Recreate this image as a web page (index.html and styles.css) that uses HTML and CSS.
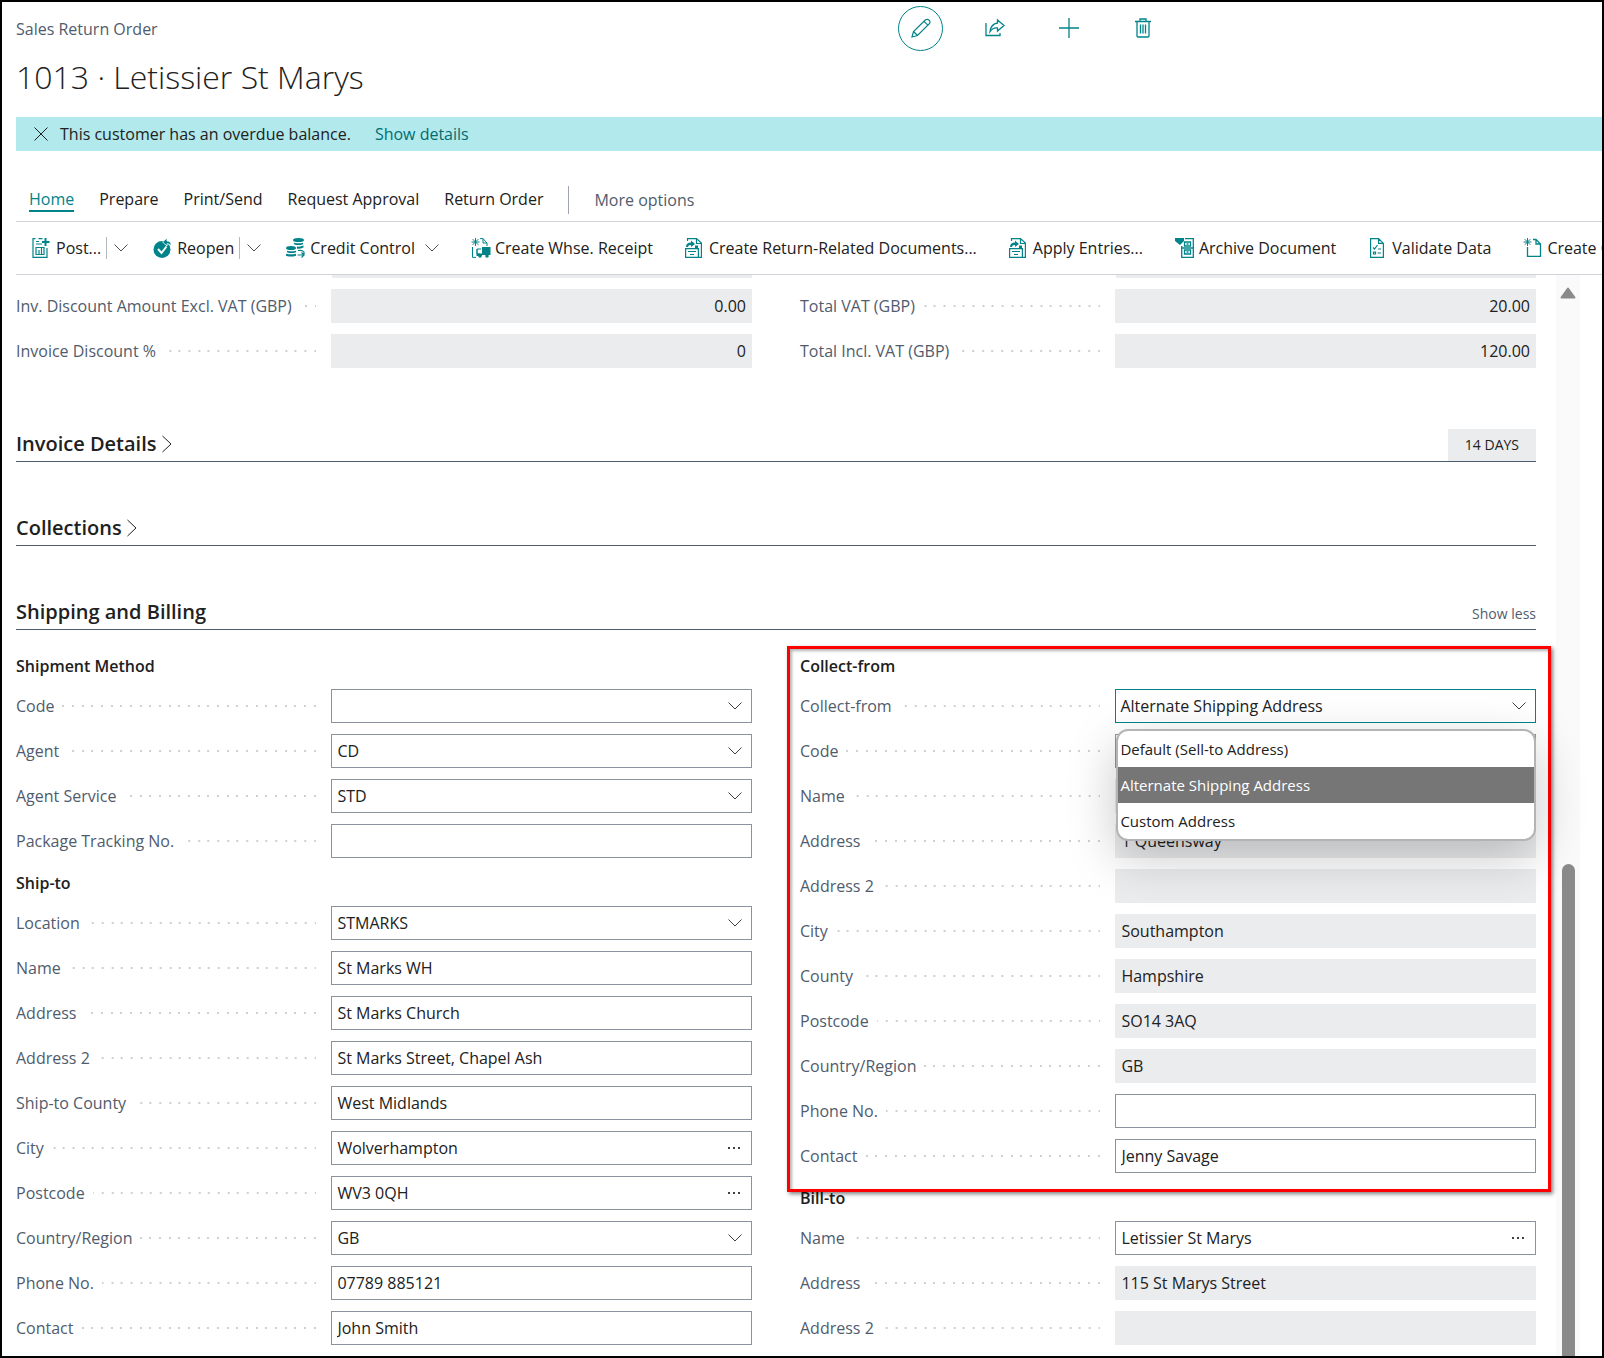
FILE: index.html
```html
<!DOCTYPE html>
<html lang="en">
<head>
    <meta charset="UTF-8">
    <meta name="viewport" content="width=device-width, initial-scale=1.0">
    <title>Sales Return Order - 1013 · Letissier St Marys</title>
    <link rel="stylesheet" href="styles.css">
</head>
<body>

    <!-- Icon sprite -->
    <svg class="sprite" aria-hidden="true">
        <symbol id="i-chevron" viewBox="0 0 14 8"><path d="M0.5 0.5 7 7 13.5 0.5" fill="none" stroke="currentColor"/></symbol>
        <symbol id="i-right" viewBox="0 0 10 18"><path d="M0.5 1 9 9 0.5 17" fill="none" stroke="currentColor"/></symbol>
        <symbol id="i-close" viewBox="0 0 14 14"><path d="M0.5 0.5 13.5 13.5M13.5 0.5 0.5 13.5" fill="none" stroke="currentColor"/></symbol>
        <symbol id="i-dots" viewBox="0 0 16 4"><path d="M2 1h2v2H2zM7 1h2v2H7zM12 1h2v2h-2z" fill="currentColor"/></symbol>
        <symbol id="i-edit" viewBox="0 0 20 20"><path d="M1 19l1.500-5.500L14.500 1.800q2-1.200 3.600.300t.300 3.600L6.500 17.500zM2.500 13.500l4 4M13 3.300l3.800 3.800" fill="none" stroke="currentColor" stroke-width="1.200"/></symbol>
        <symbol id="i-share" viewBox="0 0 20 20"><path d="M1 5v12.500h14V15" fill="none" stroke="currentColor" stroke-width="1.300"/><path d="M12.500 2 19 7.500 12.500 13v-3Q8 9.500 5 13.500 6 6 12.500 5z" fill="none" stroke="currentColor" stroke-width="1.300"/></symbol>
        <symbol id="i-plus" viewBox="0 0 20 20"><path d="M10 0v20M0 10h20" fill="none" stroke="currentColor" stroke-width="1.300"/></symbol>
        <symbol id="i-trash" viewBox="0 0 16 20"><path d="M0 3.500h16M5 3V1h6v2M2 4v14q0 1 1 1h10q1 0 1-1V4M5.500 6.500v9M8 6.500v9M10.500 6.500v9" fill="none" stroke="currentColor" stroke-width="1.300"/></symbol>
        <symbol id="i-post" viewBox="0 0 20 20"><path d="M3.500.600H1V19.400h14V10M4 3.500h3M6.500.600h4M4 6h6M4 16.500V9.500h8v7zM7 12v4.500M9.500 10v6.500" fill="none" stroke="currentColor" stroke-width="1.200"/><path d="M13.500 0v8M10 4h7.500" fill="none" stroke="currentColor" stroke-width="2"/></symbol>
        <symbol id="i-reopen" viewBox="0 0 20 20"><circle cx="9" cy="11.500" r="8.500" fill="currentColor"/><path d="M5 11l3.500 4 5-6.500" fill="none" stroke="#fff" stroke-width="2"/><path d="M9.500 4 14 0v3q4.500 0 4 5-1.500-2.500-4-2.300V8z" fill="currentColor" stroke="#fff" stroke-width=".8"/></symbol>
        <symbol id="i-coins" viewBox="0 0 20 20">
            <path d="M7 2q0-2 5.500-2T18 2t-5.500 2T7 2zM8 4.700q4.500 1.300 9 0v1.500q-4.500 1.800-9 0zM11 8.500q3.500.500 6.500-1v2q-3 1.500-6.500 1.200zM0 10q0-2 5-2t5 2-5 2-5-2zM1 12.700q4.500 1.300 9 0v1.500q-4.500 1.800-9 0zM0 15.700q4.500 1.300 10 0v2q-5 1.800-10 0z" fill="currentColor"/>
            <path d="M12 12.500q4.500-.5 6 1.500v3M11.500 17H18M15.500 14.500 18 17l-2.500 2.500" fill="none" stroke="currentColor" stroke-width="1.200"/>
        </symbol>
        <symbol id="i-whse" viewBox="0 0 20 20"><path d="M4.500 0v8M.500 4h8M1.700 1.200l5.600 5.600M7.300 1.200 1.700 6.800M9 .600h3l4 4.500V8M12 .600V5h4M1.500 9v10.400H5M6 18v-7h4M6 11v5h3" fill="none" stroke="currentColor"/><path d="M11 9h8.500v8H11z" fill="currentColor"/><path d="M6 15.500h5V18H6z" fill="currentColor"/><circle cx="9" cy="18" r="1.800" fill="currentColor"/><circle cx="16" cy="18" r="1.800" fill="currentColor"/></symbol>
        <symbol id="i-apply" viewBox="0 0 20 20"><path d="M2.500 3V.600h9L16.400 5v14.400H14M11.500.600V5.500h5M.600 10.600h12.800v8.800H.600zM3 13.500h8M5 16.500h4" fill="none" stroke="currentColor" stroke-width="1.200"/><path d="M1 9Q1 4.500 6 4.500V2.500L10 6 6 9V7Q3 7 3 9zM10 7.500h3V10h-3z" fill="currentColor"/></symbol>
        <symbol id="i-archive" viewBox="0 0 20 20"><path d="M0 0h9v3L5 7 0 3z" fill="currentColor"/><path d="M10 .700h8.300v18.600H6.700V8M9.500 4h6v4h-6zM9.500 12h6v4h-6zM6.700 10h11.600M11.500 6h2M11.500 14h2" fill="none" stroke="currentColor" stroke-width="1.300"/></symbol>
        <symbol id="i-validate" viewBox="0 0 20 20"><path d="M2.600.600h8l4.800 4.800v14H2.600zM10.600.600v4.800h4.800M5 9.500l1.500 1.500 3-4M10 11h3M9.500 15h3.500M5.500 14h2v2h-2z" fill="none" stroke="currentColor" stroke-width="1.200"/></symbol>
        <symbol id="i-new" viewBox="0 0 20 20"><path d="M10 1.500h3l4.500 4.500v12.400H4.500V9M13 1.500V6h4.500" fill="none" stroke="currentColor" stroke-width="1.300"/><path d="M4.500 0v8M.500 4h8M1.700 1.200l5.600 5.600M7.300 1.200 1.700 6.800" fill="none" stroke="currentColor"/></symbol>
    </svg>

    <div class="page">
        <header class="header">
            <div class="titles">
                <p class="caption">Sales Return Order</p>
                <h1>1013 · Letissier St Marys</h1>
            </div>
            <div class="header-actions">
                <button class="circle" aria-label="Edit"><svg width="20" height="20"><use href="#i-edit"/></svg></button>
                <button aria-label="Share"><svg width="20" height="20"><use href="#i-share"/></svg></button>
                <button aria-label="New"><svg width="20" height="20"><use href="#i-plus"/></svg></button>
                <button aria-label="Delete"><svg width="16" height="20"><use href="#i-trash"/></svg></button>
            </div>
        </header>

        <div class="notification">
            <button aria-label="Dismiss"><svg width="14" height="14"><use href="#i-close"/></svg></button>
            <span>This customer has an overdue balance.</span>
            <a href="#">Show details</a>
        </div>

        <nav class="tabs">
            <a href="#" class="active">Home</a>
            <a href="#">Prepare</a>
            <a href="#">Print/Send</a>
            <a href="#">Request Approval</a>
            <a href="#">Return Order</a>
            <a href="#" class="more">More options</a>
        </nav>

        <div class="toolbar">
            <div class="action">
                <button><svg width="20" height="20"><use href="#i-post"/></svg>Post...</button>
                <button class="split" aria-label="More posting actions"><svg width="14" height="8"><use href="#i-chevron"/></svg></button>
            </div>
            <div class="action">
                <button><svg width="20" height="20"><use href="#i-reopen"/></svg>Reopen</button>
                <button class="split" aria-label="More release actions"><svg width="14" height="8"><use href="#i-chevron"/></svg></button>
            </div>
            <div class="action">
                <button><svg width="20" height="20"><use href="#i-coins"/></svg>Credit Control<svg class="chevron" width="14" height="8"><use href="#i-chevron"/></svg></button>
            </div>
            <div class="action wide"><button><svg width="20" height="20"><use href="#i-whse"/></svg>Create Whse. Receipt</button></div>
            <div class="action wide"><button><svg width="20" height="20"><use href="#i-apply"/></svg>Create Return-Related Documents...</button></div>
            <div class="action wide"><button><svg width="20" height="20"><use href="#i-apply"/></svg>Apply Entries...</button></div>
            <div class="action wide"><button><svg width="20" height="20"><use href="#i-archive"/></svg>Archive Document</button></div>
            <div class="action wide"><button><svg width="20" height="20"><use href="#i-validate"/></svg>Validate Data</button></div>
            <div class="action wide"><button><svg width="20" height="20"><use href="#i-new"/></svg>Create C</button></div>
        </div>

        <div class="body">
            <main class="content">
                <div class="columns totals">
                    <div class="column">
                        <div class="strip"></div>
                        <div class="field">
                            <label for="inv-disc-amt">Inv. Discount Amount Excl. VAT (GBP)</label>
                            <div class="control"><input id="inv-disc-amt" class="number" value="0.00" readonly></div>
                        </div>
                        <div class="field">
                            <label for="inv-disc">Invoice Discount %</label>
                            <div class="control"><input id="inv-disc" class="number" value="0" readonly></div>
                        </div>
                    </div>
                    <div class="column">
                        <div class="strip"></div>
                        <div class="field">
                            <label for="total-vat">Total VAT (GBP)</label>
                            <div class="control"><input id="total-vat" class="number" value="20.00" readonly></div>
                        </div>
                        <div class="field">
                            <label for="total-incl">Total Incl. VAT (GBP)</label>
                            <div class="control"><input id="total-incl" class="number" value="120.00" readonly></div>
                        </div>
                    </div>
                </div>

                <div class="section-head">
                    <h2>Invoice Details <svg width="10" height="18"><use href="#i-right"/></svg></h2>
                    <span class="tag">14 DAYS</span>
                </div>
                <div class="section-head">
                    <h2>Collections <svg width="10" height="18"><use href="#i-right"/></svg></h2>
                </div>
                <div class="section-head">
                    <h2>Shipping and Billing</h2>
                    <a href="#" class="show-less">Show less</a>
                </div>

                <div class="columns shipping">
                    <div class="column">
                        <h3>Shipment Method</h3>
                        <div class="field">
                            <label for="sm-code">Code</label>
                            <div class="control"><select id="sm-code"><option></option></select><svg width="14" height="8"><use href="#i-chevron"/></svg></div>
                        </div>
                        <div class="field">
                            <label for="sm-agent">Agent</label>
                            <div class="control"><select id="sm-agent"><option>CD</option></select><svg width="14" height="8"><use href="#i-chevron"/></svg></div>
                        </div>
                        <div class="field">
                            <label for="sm-service">Agent Service</label>
                            <div class="control"><select id="sm-service"><option>STD</option></select><svg width="14" height="8"><use href="#i-chevron"/></svg></div>
                        </div>
                        <div class="field">
                            <label for="sm-tracking">Package Tracking No.</label>
                            <div class="control"><input id="sm-tracking"></div>
                        </div>

                        <h3>Ship-to</h3>
                        <div class="field">
                            <label for="st-location">Location</label>
                            <div class="control"><select id="st-location"><option>STMARKS</option></select><svg width="14" height="8"><use href="#i-chevron"/></svg></div>
                        </div>
                        <div class="field">
                            <label for="st-name">Name</label>
                            <div class="control"><input id="st-name" value="St Marks WH"></div>
                        </div>
                        <div class="field">
                            <label for="st-address">Address</label>
                            <div class="control"><input id="st-address" value="St Marks Church"></div>
                        </div>
                        <div class="field">
                            <label for="st-address2">Address 2</label>
                            <div class="control"><input id="st-address2" value="St Marks Street, Chapel Ash"></div>
                        </div>
                        <div class="field">
                            <label for="st-county">Ship-to County</label>
                            <div class="control"><input id="st-county" value="West Midlands"></div>
                        </div>
                        <div class="field">
                            <label for="st-city">City</label>
                            <div class="control"><input id="st-city" value="Wolverhampton"><button aria-label="Look up city"><svg width="16" height="4"><use href="#i-dots"/></svg></button></div>
                        </div>
                        <div class="field">
                            <label for="st-postcode">Postcode</label>
                            <div class="control"><input id="st-postcode" value="WV3 0QH"><button aria-label="Look up postcode"><svg width="16" height="4"><use href="#i-dots"/></svg></button></div>
                        </div>
                        <div class="field">
                            <label for="st-country">Country/Region</label>
                            <div class="control"><select id="st-country"><option>GB</option></select><svg width="14" height="8"><use href="#i-chevron"/></svg></div>
                        </div>
                        <div class="field">
                            <label for="st-phone">Phone No.</label>
                            <div class="control"><input id="st-phone" value="07789 885121"></div>
                        </div>
                        <div class="field">
                            <label for="st-contact">Contact</label>
                            <div class="control"><input id="st-contact" value="John Smith"></div>
                        </div>
                    </div>

                    <div class="column">
                        <div class="highlight">
                            <h3>Collect-from</h3>
                            <div class="field">
                                <label for="cf-type">Collect-from</label>
                                <div class="control focused">
                                    <select id="cf-type"><option>Alternate Shipping Address</option></select><svg width="14" height="8"><use href="#i-chevron"/></svg>
                                    <ul class="options" role="listbox" aria-label="Collect-from">
                                        <li role="option">Default (Sell-to Address)</li>
                                        <li role="option" class="selected" aria-selected="true">Alternate Shipping Address</li>
                                        <li role="option">Custom Address</li>
                                    </ul>
                                </div>
                            </div>
                            <div class="field">
                                <label for="cf-code">Code</label>
                                <div class="control"><select id="cf-code"><option></option></select></div>
                            </div>
                            <div class="field">
                                <label for="cf-name">Name</label>
                                <div class="control"><input id="cf-name" readonly></div>
                            </div>
                            <div class="field">
                                <label for="cf-address">Address</label>
                                <div class="control"><input id="cf-address" value="1 Queensway" readonly></div>
                            </div>
                            <div class="field">
                                <label for="cf-address2">Address 2</label>
                                <div class="control"><input id="cf-address2" readonly></div>
                            </div>
                            <div class="field">
                                <label for="cf-city">City</label>
                                <div class="control"><input id="cf-city" value="Southampton" readonly></div>
                            </div>
                            <div class="field">
                                <label for="cf-county">County</label>
                                <div class="control"><input id="cf-county" value="Hampshire" readonly></div>
                            </div>
                            <div class="field">
                                <label for="cf-postcode">Postcode</label>
                                <div class="control"><input id="cf-postcode" value="SO14 3AQ" readonly></div>
                            </div>
                            <div class="field">
                                <label for="cf-country">Country/Region</label>
                                <div class="control"><input id="cf-country" value="GB" readonly></div>
                            </div>
                            <div class="field">
                                <label for="cf-phone">Phone No.</label>
                                <div class="control"><input id="cf-phone"></div>
                            </div>
                            <div class="field">
                                <label for="cf-contact">Contact</label>
                                <div class="control"><input id="cf-contact" value="Jenny Savage"></div>
                            </div>
                        </div>

                        <h3>Bill-to</h3>
                        <div class="field">
                            <label for="bt-name">Name</label>
                            <div class="control"><input id="bt-name" value="Letissier St Marys"><button aria-label="Look up customer"><svg width="16" height="4"><use href="#i-dots"/></svg></button></div>
                        </div>
                        <div class="field">
                            <label for="bt-address">Address</label>
                            <div class="control"><input id="bt-address" value="115 St Marys Street" readonly></div>
                        </div>
                        <div class="field">
                            <label for="bt-address2">Address 2</label>
                            <div class="control"><input id="bt-address2" readonly></div>
                        </div>
                    </div>
                </div>
            </main>

            <div class="scrollbar" aria-hidden="true">
                <svg width="16" height="12" viewBox="0 0 16 12"><path d="M8 1.500 14.500 10.500H1.500z" fill="#8a8a8a" stroke="#8a8a8a" stroke-width="2" stroke-linejoin="round"/></svg>
                <div class="thumb"></div>
            </div>
        </div>
    </div>

</body>
</html>
```

FILE: styles.css
```css
* {
    box-sizing: border-box;
}
body {
    margin: 0;
    font-family: "Open Sans", "Segoe UI", sans-serif;
    font-size: 16px;
    line-height: 22px;
    color: #212121;
    background-color: #fff;
}
h1, h2, h3, p, ul {
    margin: 0;
    padding: 0;
}
a {
    color: inherit;
    text-decoration: none;
}
button {
    display: flex;
    align-items: center;
    padding: 0;
    border: none;
    background: none;
    font: inherit;
    color: inherit;
    white-space: nowrap;
    cursor: pointer;
}
svg {
    flex: none;
}
.sprite {
    display: none;
}
.page {
    display: flex;
    flex-direction: column;
    height: 100vh;
    border: 2px solid #000;
    padding-left: 14px;
    overflow: hidden;
}

/* Header */
.header {
    display: grid;
    grid-template-columns: 1fr 704px;
    height: 115px;
    flex: none;
}
.caption {
    padding-top: 16px;
    color: #505c6d;
}
h1 {
    padding-top: 13px;
    font-size: 32px;
    line-height: 48px;
    font-weight: 300;
}
.header-actions {
    display: flex;
    align-items: center;
    gap: 29px;
    height: 52px;
    color: #008489;
}
.header-actions button {
    justify-content: center;
    width: 45px;
    height: 45px;
}
.header-actions .circle {
    border: 1px solid #008489;
    border-radius: 50%;
}

/* Notification */
.notification {
    display: flex;
    align-items: center;
    flex: none;
    height: 34px;
    padding-left: 18px;
    background-color: #b2e9ec;
}
.notification button {
    margin-right: 12px;
}
.notification a {
    margin-left: 24px;
    color: #006d71;
}

/* Tabs and toolbar */
.tabs {
    display: flex;
    align-items: center;
    gap: 25px;
    flex: none;
    height: 71px;
    padding: 27px 0 0 13px;
    border-bottom: 1px solid #d0d2d8;
}
.tabs a {
    border-bottom: 2px solid transparent;
    white-space: nowrap;
}
.tabs .active {
    color: #008489;
    border-color: #008489;
}
.tabs .more {
    padding-left: 25px;
    border-bottom: none;
    border-left: 1px solid #a0a5ae;
    line-height: 28px;
    color: #505c6d;
}
.toolbar {
    display: flex;
    align-items: center;
    gap: 25px;
    flex: none;
    height: 53px;
    padding-left: 16px;
    border-bottom: 1px solid #d0d2d8;
    overflow: hidden;
}
.action {
    display: flex;
    flex: none;
    align-items: center;
}
.action svg {
    margin-right: 4px;
    color: #008489;
}
.action .split {
    height: 22px;
    margin-left: 5px;
    padding-left: 7px;
    border-left: 1px solid #b4b8c0;
}
.action .split svg, .action .chevron {
    margin-right: 0;
    color: #505050;
}
.action .chevron {
    margin-left: 10px;
}
.wide {
    margin-left: 7px;
}

/* Scrolling area */
.body {
    display: flex;
    flex: 1;
    min-height: 0;
}
.content {
    flex: 1;
    min-width: 0;
}
.scrollbar {
    display: flex;
    flex-direction: column;
    align-items: center;
    justify-content: space-between;
    width: 24px;
    margin: 0 22px 0 20px;
    padding-top: 12px;
    background-color: #fafafa;
}
.thumb {
    width: 13px;
    height: 46%;
    border-radius: 7px 7px 0 0;
    background-color: #8a8a8a;
}
.columns {
    display: grid;
    grid-template-columns: 1fr 1fr;
    gap: 48px;
}
.totals {
    height: 103px;
}
.strip {
    height: 3px;
    margin: 0 0 11px 43%;
    background-color: #ebecee;
}

/* Fields */
.field {
    display: grid;
    grid-template-columns: 3fr 4fr;
    height: 34px;
    margin-bottom: 11px;
}
.field label {
    display: flex;
    align-items: center;
    margin-right: 15px;
    color: #505c6d;
    white-space: nowrap;
}
/* dotted leader, three dots per tile */
.field label::after {
    content: "";
    flex: 1;
    height: 2px;
    margin-left: 8px;
    background-image: linear-gradient(90deg, transparent 7px, #cdcfd3 7px 9px, transparent 9px 17px, #cdcfd3 17px 19px, transparent 19px 27px, #cdcfd3 27px);
    background-size: 29px 2px;
    background-position: right top;
}
.control {
    position: relative;
    display: grid;
    align-items: center;
}
.control > * {
    grid-area: 1 / 1;
}
.control input, .control select {
    width: 100%;
    height: 34px;
    margin: 0;
    padding: 0 5px;
    border: 1px solid #8c93a0;
    border-radius: 0;
    background-color: #fff;
    font: inherit;
    color: #212121;
    appearance: none;
    outline: none;
}
.control input[readonly] {
    border-color: #ebecee;
    background-color: #ebecee;
}
.control .number {
    text-align: right;
}
.control > svg, .control > button {
    justify-self: end;
    margin-right: 10px;
    color: #404040;
}
.control > svg {
    pointer-events: none;
}
.focused select {
    padding-left: 4px;
    border-color: #008489;
}

/* Open drop-down list */
.options {
    position: absolute;
    z-index: 2;
    top: 40px;
    left: 1px;
    right: 0;
    border: 2px solid #b4b4b6;
    border-radius: 12px;
    background-color: #fff;
    box-shadow: 0 16px 50px rgba(0, 0, 0, 0.22);
    font-size: 15px;
    list-style: none;
    overflow: hidden;
}
.options li {
    padding-left: 2px;
    line-height: 36px;
}
.options .selected {
    background-color: #767676;
    color: #fff;
}

/* Section headings */
.section-head {
    display: flex;
    align-items: flex-end;
    justify-content: space-between;
    height: 84px;
    border-bottom: 1px solid #505c6d;
}
h2 {
    display: flex;
    align-items: center;
    gap: 5px;
    padding-bottom: 2px;
    font-size: 20px;
    line-height: 30px;
    font-weight: 600;
}
.tag {
    padding: 0 17px;
    background-color: #ebecee;
    font-size: 14px;
    line-height: 32px;
}
.show-less {
    padding-bottom: 4px;
    font-size: 14px;
    color: #505c6d;
}
.shipping {
    padding-top: 22px;
}
h3 {
    margin-bottom: 9px;
    font-size: 16px;
    line-height: 28px;
    font-weight: 600;
}

/* Red frame around the collect-from group */
.highlight {
    position: relative;
}
.highlight::after {
    content: "";
    position: absolute;
    z-index: 1;
    inset: -6px -15px -19px -13px;
    border: 3px solid #f00;
    box-shadow: 2px 2px 4px rgba(0, 0, 0, 0.5), inset 2px 2px 3px rgba(0, 0, 0, 0.3);
    pointer-events: none;
}
```
